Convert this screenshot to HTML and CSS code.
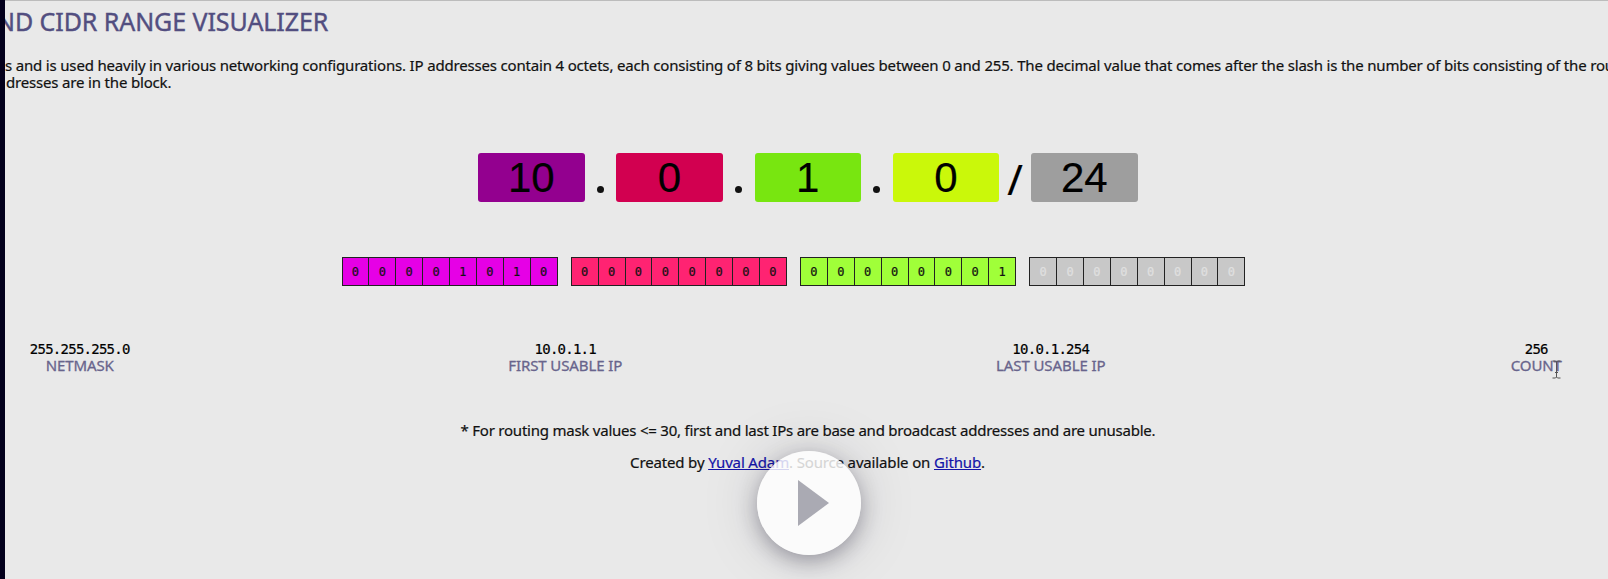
FILE: index.html
```html
<!DOCTYPE html>
<html lang="en">
<head>
<meta charset="utf-8">
<title>CIDR Range Visualizer</title>
<link rel="stylesheet" href="styles.css">
</head>
<body>
<main class="page">
  <h1 class="title">ND CIDR RANGE VISUALIZER</h1>
  <p class="intro"><span class="line">s and is used heavily in various networking configurations. IP addresses contain 4 octets, each consisting of 8 bits giving values between 0 and 255. The decimal value that comes after the slash is the number of bits consisting of the rou</span><br><span class="line second">dresses are in the block.</span></p>
  <div class="address">
    <div class="octet purple">10</div><div class="sep"><i class="dot"></i></div>
    <div class="octet red">0</div><div class="sep"><i class="dot"></i></div>
    <div class="octet green">1</div><div class="sep"><i class="dot"></i></div>
    <div class="octet yellow">0</div><div class="sep slash">/</div>
    <div class="octet gray">24</div>
  </div>
  <div class="bits">
    <div class="group magenta"><b>0</b><b>0</b><b>0</b><b>0</b><b>1</b><b>0</b><b>1</b><b>0</b></div>
    <div class="group pink"><b>0</b><b>0</b><b>0</b><b>0</b><b>0</b><b>0</b><b>0</b><b>0</b></div>
    <div class="group lime"><b>0</b><b>0</b><b>0</b><b>0</b><b>0</b><b>0</b><b>0</b><b>1</b></div>
    <div class="group masked"><b>0</b><b>0</b><b>0</b><b>0</b><b>0</b><b>0</b><b>0</b><b>0</b></div>
  </div>
  <div class="stats">
    <div class="stat"><span class="value">255.255.255.0</span><span class="label">NETMASK</span></div>
    <div class="stat"><span class="value">10.0.1.1</span><span class="label">FIRST USABLE IP</span></div>
    <div class="stat"><span class="value">10.0.1.254</span><span class="label">LAST USABLE IP</span></div>
    <div class="stat"><span class="value">256</span><span class="label">COUNT</span></div>
  </div>
  <p class="note">* For routing mask values &lt;= 30, first and last IPs are base and broadcast addresses and are unusable.</p>
  <p class="credit">Created by <a href="#">Yuval Adam</a>. Source available on <a href="#">Github</a>.</p>
</main>
<svg class="cursor" width="9" height="19" viewBox="0 0 9 19"><path d="M.5 1h3l1 1 1-1h3M4.500 2v15M.5 18h3l1-1 1 1h3M3 12.500h3" /></svg>
<button class="play" aria-label="Play"><svg width="31" height="46" viewBox="0 0 31 46"><path d="M0 0L31 23L0 46Z"/></svg></button>
</body>
</html>
```
FILE: styles.css
```css
* { box-sizing: border-box; }
body {
  margin: 0;
  width: 1608px;
  height: 579px;
  overflow: hidden;
  position: relative;
  background: #e9e9e9;
  color: #111;
  font: 15px/17px "Noto Sans", sans-serif;
  -webkit-text-stroke: .2px;
}
.page {
  height: 579px;
  overflow: hidden;
  border-left: 5px solid #03001c;
  box-shadow: inset 0 1px #bcbcbc;
  padding-top: 4px;
}
.title {
  margin: 0 0 0 -9px;
  height: 53px;
  font-size: 25px;
  line-height: 34px;
  font-weight: 400;
  letter-spacing: -.07px;
  color: #524e80;
  white-space: nowrap;
  -webkit-text-stroke: .4px;
}
.intro { margin: 0; height: 96px; white-space: nowrap; }
.line { letter-spacing: -.175px; }
.second { margin-left: 1px; }
.address { display: flex; margin-left: 473px; height: 49px; }
.octet {
  width: 106.500px;
  height: 49px;
  border-radius: 3px;
  font: 42px/49px "Liberation Sans", sans-serif;
  text-align: center;
  color: #000;
}
.sep { width: 31.750px; display: flex; justify-content: center; }
.dot { width: 7px; height: 7px; margin-top: 33px; border-radius: 50%; background: #111; }
.slash { font-size: 42px; line-height: 52px; color: #000; }
.purple { background: #93008f; }
.red { background: #d20050; }
.green { background: #78e610; }
.yellow { background: #caf80a; }
.gray { background: #9e9e9e; }
.bits { display: flex; gap: 13.250px; margin: 54.500px 0 0 336.500px; }
.group {
  display: flex;
  width: 216px;
  height: 29.500px;
  border: 1px solid #222;
}
.group b {
  flex: 1;
  text-align: center;
  font: 12px/28px "DejaVu Sans Mono", monospace;
}
.group b + b { border-left: 1px solid #222; }
.magenta { background: #e600e6; }
.pink { background: #ff2372; }
.lime { background: #a0ff39; }
.masked { background: #c8c8c8; color: #e0e0e0; }
.stats { display: flex; margin: 55px 0 0 -168px; width: 1942px; }
.stat { flex: 1; display: flex; flex-direction: column; align-items: center; }
.value { font: 14px/16px "DejaVu Sans Mono", monospace; letter-spacing: -.75px; color: #000; }
.label { color: #68648c; letter-spacing: -.1px; -webkit-text-stroke: .3px; }
.note { margin: 48px 0 0 3px; text-align: center; letter-spacing: -.23px; }
.credit { margin: 15px 0 0 2px; text-align: center; letter-spacing: -.15px; }
.credit a { color: #1414a8; }
.cursor {
  position: absolute;
  left: 1552px;
  top: 360px;
  fill: none;
  stroke: #555;
}
.play {
  position: absolute;
  left: 756.500px;
  top: 451px;
  width: 104px;
  height: 104px;
  padding: 0 0 0 9px;
  border: 0;
  border-radius: 50%;
  display: flex;
  align-items: center;
  justify-content: center;
  background: rgba(255, 255, 255, .82);
  box-shadow: 0 6px 20px rgba(30, 25, 50, .35), 0 0 60px rgba(30, 25, 50, .15);
}
.play path { fill: #aaaab3; }
```
